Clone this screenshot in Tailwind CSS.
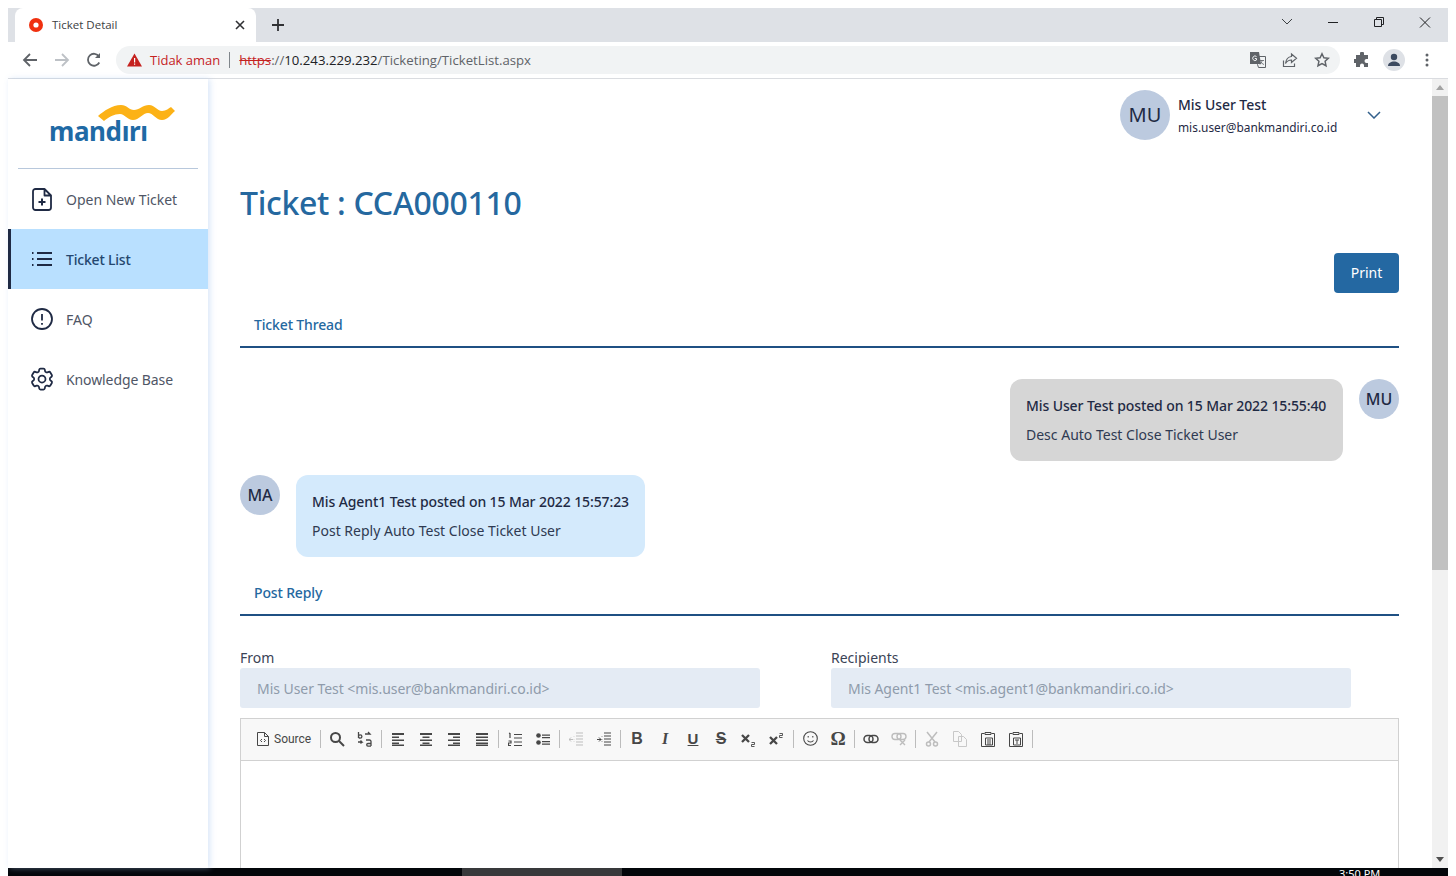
<!DOCTYPE html>
<html lang="en">
<head>
  <meta charset="UTF-8" />
  <title>Ticket Detail</title>
  <script src="https://cdn.jsdelivr.net/npm/@tailwindcss/browser@4"></script>
</head>
<body class="bg-white overflow-hidden font-['Noto_Sans','Open_Sans',sans-serif]">
  <div class="w-[1456px] h-[876px] pt-2 px-2 flex flex-col overflow-hidden">

    <!-- tab strip -->
    <div class="h-[34px] shrink-0 bg-[#dee1e6] flex items-end pl-[7px] relative">
      <div class="w-[241px] h-[34px] bg-white rounded-t-[8px] flex items-center pl-[13px] pr-[11px] pb-[1px]">
        <svg class="w-[16px] h-[16px]" viewBox="0 0 16 16"><circle cx="8" cy="8" r="7" fill="#f0300f"/><circle cx="8" cy="8" r="2.6" fill="#fff"/></svg>
        <span class="ml-[8px] text-[11.5px] text-[#3c4043] font-['Open_Sans',sans-serif]">Ticket Detail</span>
        <svg class="ml-auto w-[10px] h-[10px]" viewBox="0 0 10 10" fill="none" stroke="#303134" stroke-width="1.6"><path d="M1 1l8 8M9 1l-8 8"/></svg>
      </div>
      <svg class="w-[14px] h-[14px] ml-[15px] mb-[10px]" viewBox="0 0 14 14" fill="none" stroke="#303134" stroke-width="1.8"><path d="M7 1v12M1 7h12"/></svg>
      <div class="ml-auto flex items-center h-[28px] self-start text-[#202124]">
        <svg class="w-[46px] h-[28px]" viewBox="0 0 46 28" fill="none" stroke="#3c4043"><path d="M18 11l5 5 5-5"/></svg>
        <svg class="w-[46px] h-[28px]" viewBox="0 0 46 28" fill="none" stroke="#202124"><path d="M18 14.5h10"/></svg>
        <svg class="w-[46px] h-[28px]" viewBox="0 0 46 28" fill="none" stroke="#202124"><path d="M18.5 11.5h7v7h-7zM20.5 11.500v-2h7v7h-2"/></svg>
        <svg class="w-[46px] h-[28px]" viewBox="0 0 46 28" fill="none" stroke="#202124"><path d="M18 9.500l10 10M28 9.500l-10 10"/></svg>
      </div>
    </div>

    <!-- address bar -->
    <div class="h-[37px] shrink-0 flex items-center border-b border-[#dadce0] relative">
      <svg class="w-[16px] h-[16px] ml-[14px]" viewBox="0 0 16 16" fill="none" stroke="#5f6368" stroke-width="1.8"><path d="M15 8H2M8 2L2 8l6 6"/></svg>
      <svg class="w-[16px] h-[16px] ml-[16px]" viewBox="0 0 16 16" fill="none" stroke="#bdc1c6" stroke-width="1.8"><path d="M1 8h13M8 2l6 6-6 6"/></svg>
      <svg class="w-[16px] h-[16px] ml-[16px]" viewBox="0 0 16 16" fill="none" stroke="#5f6368" stroke-width="1.8"><path d="M13.3 10.5A6 6 0 1 1 13 4.5"/><path d="M14 1v5H9" fill="#5f6368" stroke="none"/></svg>
      <div class="ml-[14px] w-[1224px] h-[28px] bg-[#f1f3f4] rounded-full flex items-center pl-[11px] text-[13px] font-['Open_Sans',sans-serif]">
        <svg class="w-[15px] h-[14px]" viewBox="0 0 15 14"><path d="M7.5 0.5L15 13.5H0z" fill="#c5221f"/><path d="M7 5h1.200v4.500H7zM7 10.500h1.200v1.300H7z" fill="#fff"/></svg>
        <span class="ml-[8px] pt-[1px] text-[#c5221f]">Tidak aman</span>
        <span class="w-px h-[16px] bg-[#80868b] ml-[9px]"></span>
        <span class="pt-[1px] text-[13.2px]"><span class="ml-[9px] text-[#c5221f] line-through">https</span><span class="text-[#5f6368]">://</span><span class="text-[#202124]">10.243.229.232</span><span class="text-[#5f6368]">/Ticketing/TicketList.aspx</span></span>
        <div class="ml-auto flex items-center pr-[10px] gap-[16px]">
          <svg class="w-[16px] h-[16px]" viewBox="0 0 16 16"><path d="M6.5 4.5h9v11h-7l-1-3z" fill="#f1f3f4" stroke="#5f6368"/><path d="M0 0h9l2 12H0z" fill="#5f6368"/><path d="M6.500 4.500a2.300 2.300 0 1 0 0 3.500V6.500H4.800" fill="none" stroke="#f1f3f4"/><path d="M10 8.500h4M12 8c0 2-1 3.500-2 4.500M11 10c.5 1 1.500 2 3 2.500" stroke="#5f6368" stroke-width=".8" fill="none"/></svg>
          <svg class="w-[16px] h-[16px]" viewBox="0 0 16 16" fill="none" stroke="#5f6368" stroke-width="1.200"><path d="M1.500 8.500v6h11v-3"/><path d="M9.500 2l5 4.200-5 4.200V8C7 8 5 9 3.500 11.500 4 7.500 6 4.800 9.500 4.500z"/></svg>
          <svg class="w-[16px] h-[16px]" viewBox="0 0 16 16" fill="none" stroke="#5f6368" stroke-width="1.500"><path d="M8 1.800l1.900 4 4.400.5-3.200 3 .9 4.400L8 11.500l-4 2.200.9-4.400-3.200-3 4.400-.5z"/></svg>
        </div>
      </div>
      <svg class="w-[16px] h-[16px] ml-[14px]" viewBox="0 0 16 16" fill="#5f6368"><path d="M6 1.500a2 2 0 0 1 4 0V3h4v4h-1.500a2 2 0 0 0 0 4H14v4h-4v-1.500a2 2 0 0 0-4 0V15H2v-4H.8a2 2 0 0 1 0-4H2V3h4z"/></svg>
      <div class="ml-[13px] w-[22px] h-[22px] rounded-full bg-[#dee1e6] flex items-center justify-center">
        <svg class="w-[14px] h-[14px]" viewBox="0 0 14 14" fill="#3c4a60"><circle cx="7" cy="4" r="3.200"/><path d="M1 13c0-3 3-4.500 6-4.500s6 1.500 6 4.500z"/></svg>
      </div>
      <svg class="w-[4px] h-[14px] ml-[20px]" viewBox="0 0 4 14" fill="#5f6368"><circle cx="2" cy="2" r="1.500"/><circle cx="2" cy="7" r="1.500"/><circle cx="2" cy="12" r="1.500"/></svg>
    </div>

    <!-- page -->
    <div class="flex-1 flex min-h-0">
      <!-- sidebar -->
      <aside class="w-[200px] shrink-0 bg-white shadow-[2px_0_6px_rgba(170,200,240,0.45)] relative z-10 flex flex-col">
        <div class="h-[90px] mx-[10px] border-b border-[#b8c8dc] shrink-0 relative">
          <span class="absolute left-[31px] top-[34px] text-[26px] leading-[36px] font-bold text-[#1f6aa5] tracking-[-0.4px]">mandırı</span>
          <svg class="absolute left-[80px] top-[26px] w-[77px] h-[16px]" viewBox="0 0 77 16" fill="#fcb216"><path d="M0 11C6 6 14 0 23 0C29 0 31 5 36 5C41 5 45 0 51 0C57 0 59 6 64 6C68 6 71 3 73 2L77 6C73 9 70 15 64 15C58 15 55 8 50 8C45 8 41 15 35 15C29 15 27 9 22 9C16 9 11 12 6 16Z"/></svg>
        </div>
        <a class="h-[60px] flex items-center pl-[20px] text-[14px] text-[#4f5666]">
          <span class="w-[28px] flex justify-center"><svg class="w-[20px] h-[23px]" viewBox="0 0 20 23" fill="none" stroke="#1f2a44" stroke-width="1.800" stroke-linejoin="round"><path d="M12.500 1H3.500A2.500 2.500 0 0 0 1 3.500v16A2.500 2.500 0 0 0 3.500 22h13a2.500 2.500 0 0 0 2.500-2.500V7.500zM12.500 1v6.500H19"/><path d="M10 10.500v7M6.500 14h7" stroke-width="2"/></svg></span>
          <span class="ml-[10px]">Open New Ticket</span>
        </a>
        <a class="h-[60px] flex items-center pl-[17px] bg-[#b9e0ff] border-l-[3px] border-[#1f2a44] text-[14px] font-medium tracking-[-0.2px] text-[#24476f]">
          <span class="w-[28px] flex justify-center"><svg class="w-[22px] h-[16px]" viewBox="0 0 22 16" fill="none" stroke="#1f2a44" stroke-width="1.800"><path d="M6 2h15M6 8h15M6 14h15M1 2h1.500M1 8h1.500M1 14h1.500"/></svg></span>
          <span class="ml-[10px]">Ticket List</span>
        </a>
        <a class="h-[60px] flex items-center pl-[20px] text-[14px] text-[#4f5666]">
          <span class="w-[28px] flex justify-center"><svg class="w-[22px] h-[22px]" viewBox="0 0 22 22" fill="none" stroke="#1f2a44" stroke-width="1.800"><circle cx="11" cy="11" r="10"/><path d="M11 6v6.500M11 15v1.800"/></svg></span>
          <span class="ml-[10px]">FAQ</span>
        </a>
        <a class="h-[60px] flex items-center pl-[20px] text-[14px] text-[#4f5666]">
          <span class="w-[28px] flex justify-center"><svg class="w-[28px] h-[28px]" viewBox="0 0 24 24" fill="none" stroke="#1f2a44" stroke-width="1.500" stroke-linecap="round" stroke-linejoin="round"><path d="M9.594 3.94c.09-.542.56-.94 1.11-.94h2.593c.55 0 1.02.398 1.11.94l.213 1.281c.063.374.313.686.645.87.074.04.147.083.22.127.325.196.72.257 1.075.124l1.217-.456a1.125 1.125 0 0 1 1.37.49l1.296 2.247a1.125 1.125 0 0 1-.26 1.431l-1.003.827c-.293.241-.438.613-.43.992a7.723 7.723 0 0 1 0 .255c-.008.378.137.75.43.991l1.004.827c.424.35.534.955.26 1.43l-1.298 2.247a1.125 1.125 0 0 1-1.369.491l-1.217-.456c-.355-.133-.75-.072-1.076.124a6.47 6.47 0 0 1-.22.128c-.331.183-.581.495-.644.869l-.213 1.281c-.09.543-.56.94-1.11.94h-2.594c-.55 0-1.019-.398-1.11-.94l-.213-1.281c-.062-.374-.312-.686-.644-.87a6.52 6.52 0 0 1-.22-.127c-.325-.196-.72-.257-1.076-.124l-1.217.456a1.125 1.125 0 0 1-1.369-.49l-1.297-2.247a1.125 1.125 0 0 1 .26-1.431l1.004-.827c.292-.24.437-.613.43-.991a6.932 6.932 0 0 1 0-.255c.007-.38-.138-.751-.43-.992l-1.004-.827a1.125 1.125 0 0 1-.26-1.43l1.297-2.247a1.125 1.125 0 0 1 1.37-.491l1.216.456c.356.133.751.072 1.076-.124.072-.044.146-.086.22-.128.332-.183.582-.495.644-.869l.214-1.28Z"/><path d="M15 12a3 3 0 1 1-6 0 3 3 0 0 1 6 0Z"/></svg></span>
          <span class="ml-[10px] tracking-[-0.1px]">Knowledge Base</span>
        </a>
      </aside>

      <!-- main -->
      <main class="w-[1224px] shrink-0 overflow-hidden pl-[32px] pr-[33px] text-[14px] text-[#1f2a44]">
        <div class="h-[61px] pt-[11px] flex justify-end ml-[-32px] mr-[-33px]">
          <div class="flex items-center h-[50px] w-[312px]">
            <div class="w-[50px] h-[50px] rounded-full bg-[#bccadf] flex items-center justify-center text-[20px] text-[#1f2a44]">MU</div>
            <div class="ml-[8px] w-[188px]">
              <div class="text-[14px] font-medium leading-[20px] tracking-[-0.05px] text-[#1f2a44]">Mis User Test</div>
              <div class="text-[11.9px] leading-[16px] mt-[4px] text-[#1f2a44]">mis.user@bankmandiri.co.id</div>
            </div>
            <svg class="w-[14px] h-[8px] ml-[1px]" viewBox="0 0 14 8" fill="none" stroke="#33608c" stroke-width="1.500"><path d="M1 1l6 6 6-6"/></svg>
          </div>
        </div>
        <h1 class="mt-[36px] text-[32px] leading-[54px] font-medium tracking-[-0.3px] text-[#25689f]">Ticket : CCA000110</h1>
        <div class="flex justify-end mt-[23px]">
          <button class="w-[65px] h-[40px] pb-[2px] rounded-[4px] bg-[#2468a2] text-white text-[14px]">Print</button>
        </div>
        <div class="mt-[12px] h-[43px] pl-[14px] pb-[2px] border-b-2 border-[#1f5083] flex items-center font-medium tracking-[-0.15px] text-[#25689f]">Ticket Thread</div>

        <div class="mt-[31px] flex justify-end gap-[16px]">
          <div class="w-[333px] h-[82px] bg-[#d6d6d6] rounded-[12px] px-[16px] pt-[17px] whitespace-nowrap">
            <p class="leading-[20px] font-medium tracking-[-0.1px]">Mis User Test posted on 15 Mar 2022 15:55:40</p>
            <p class="leading-[20px] mt-[9px] text-[#2f3a52]">Desc Auto Test Close Ticket User</p>
          </div>
          <div class="w-[40px] h-[40px] rounded-full bg-[#bccadf] flex items-center justify-center text-[16px] font-medium">MU</div>
        </div>

        <div class="mt-[14px] flex gap-[16px]">
          <div class="w-[40px] h-[40px] rounded-full bg-[#bccadf] flex items-center justify-center text-[16px] font-medium">MA</div>
          <div class="w-[349px] h-[82px] bg-[#d4eafc] rounded-[12px] px-[16px] pt-[17px] whitespace-nowrap">
            <p class="leading-[20px] font-medium tracking-[-0.1px]">Mis Agent1 Test posted on 15 Mar 2022 15:57:23</p>
            <p class="leading-[20px] mt-[9px] text-[#2f3a52]">Post Reply Auto Test Close Ticket User</p>
          </div>
        </div>

        <div class="mt-[14px] h-[45px] pl-[14px] border-b-2 border-[#1f5083] flex items-center font-medium tracking-[-0.15px] text-[#25689f]">Post Reply</div>

        <div class="mt-[32px] flex gap-[71px]">
          <div class="w-[520px]">
            <label class="block leading-[20px] text-[#3a4356]">From</label>
            <div class="h-[40px] bg-[#e4ebf4] rounded-[3px] pl-[17px] flex items-center tracking-[-0.05px] text-[#8f9bab]">Mis User Test &lt;mis.user@bankmandiri.co.id&gt;</div>
          </div>
          <div class="w-[520px]">
            <label class="block leading-[20px] text-[#3a4356]">Recipients</label>
            <div class="h-[40px] bg-[#e4ebf4] rounded-[3px] pl-[17px] flex items-center tracking-[-0.05px] text-[#8f9bab]">Mis Agent1 Test &lt;mis.agent1@bankmandiri.co.id&gt;</div>
          </div>
        </div>

        <!-- editor -->
        <div class="mt-[10px] h-[200px] border border-[#d1d1d1]">
          <div class="h-[42px] pb-[2px] bg-[#f8f8f8] border-b border-[#d1d1d1] flex items-center text-[#474747]">
            <div class="flex items-center w-[79px] pl-[16px] font-['Roboto',sans-serif] text-[12px]">
              <svg class="w-[12px] h-[14px] shrink-0" viewBox="0 0 12 14" fill="none" stroke="#474747"><path d="M7.500.5H.5v13h11V4.500zM7.500.5v4h4"/><path d="M5 7L3.500 8.500 5 10M7 7l1.500 1.500L7 10"/></svg>
              <span class="ml-[5px]">Source</span>
            </div>
            <span class="w-px h-[18px] bg-[#bcbcbc] mr-[2px]"></span>
            <span class="w-[28px] flex justify-center"><svg class="w-[16px] h-[16px]" viewBox="0 0 16 16" fill="none" stroke="#474747" stroke-width="2"><circle cx="6.500" cy="6.500" r="4.500"/><path d="M10 10l5 5"/></svg></span>
            <span class="w-[28px] flex justify-center"><svg class="w-[16px] h-[16px]" viewBox="0 0 16 16" fill="none" stroke="#474747" stroke-width="1.300"><path d="M1.500 1v6M1.500 5.500a1.700 1.700 0 1 0 3.400 0 1.700 1.700 0 1 0-3.400 0M8 3h5l-2-2M1 11h4l-1.500-1.500M5 11l-1.500 1.500M9 9h3.500a1.500 1.500 0 0 1 1.500 1.500V15M14 12.500h-3a1.300 1.300 0 0 0 0 2.600h3"/></svg></span>
            <span class="w-px h-[18px] bg-[#bcbcbc] mx-[2px]"></span>
            <span class="w-[28px] flex justify-center"><svg class="w-[14px] h-[14px]" viewBox="0 0 14 14" fill="#474747"><path d="M1 1h12v2H1zM1 4.500h7v1.500H1zM1 7.500h12v1.500H1zM1 10.500h7v1.500H1zM1 12.500h12V14H1z"/></svg></span>
            <span class="w-[28px] flex justify-center"><svg class="w-[14px] h-[14px]" viewBox="0 0 14 14" fill="#474747"><path d="M1 1h12v2H1zM3.500 4.500h7v1.500h-7zM1 7.500h12v1.500H1zM3.500 10.500h7v1.500h-7zM1 12.500h12V14H1z"/></svg></span>
            <span class="w-[28px] flex justify-center"><svg class="w-[14px] h-[14px]" viewBox="0 0 14 14" fill="#474747"><path d="M1 1h12v2H1zM6 4.500h7v1.500H6zM1 7.500h12v1.500H1zM6 10.500h7v1.500H6zM1 12.500h12V14H1z"/></svg></span>
            <span class="w-[28px] flex justify-center"><svg class="w-[14px] h-[14px]" viewBox="0 0 14 14" fill="#474747"><path d="M1 1h12v2H1zM1 4.500h12v1.500H1zM1 7.500h12v1.500H1zM1 10.500h12v1.500H1zM1 12.500h12V14H1z"/></svg></span>
            <span class="w-px h-[18px] bg-[#bcbcbc] mx-[2px]"></span>
            <span class="w-[28px] flex justify-center"><svg class="w-[14px] h-[14px]" viewBox="0 0 14 14" fill="none" stroke="#474747" stroke-width="1.200"><path d="M6 2.500h8M6 6h8M6 10h8M6 13.500h8M2 1v5M1 1.500l1-.5M.5 9h2.500v2H.5v2.500H3"/></svg></span>
            <span class="w-[28px] flex justify-center"><svg class="w-[14px] h-[14px]" viewBox="0 0 14 14" fill="#474747"><circle cx="2.500" cy="3.500" r="2.300"/><circle cx="2.500" cy="10.500" r="2.300"/><path d="M6 2.500h8v1.200H6zM6 5h8v1.200H6zM6 9h8v1.200H6zM6 11.500h8v1.200H6z"/></svg></span>
            <span class="w-px h-[18px] bg-[#bcbcbc] mx-[2px]"></span>
            <span class="w-[28px] flex justify-center"><svg class="w-[14px] h-[14px]" viewBox="0 0 14 14" fill="none" stroke="#bdbdbd"><path d="M7 1h7M7 4h7M7 7h7M7 10h7M7 13h7M5 4.500v.5M5 7v.5M5 9.500v.5M4 7.500H0M2 5.500l-2 2 2 2"/></svg></span>
            <span class="w-[28px] flex justify-center"><svg class="w-[14px] h-[14px]" viewBox="0 0 14 14" fill="none" stroke="#474747"><path d="M7 1h7M7 4h7M7 7h7M7 10h7M7 13h7M5 4.500v.5M5 7v.5M5 9.500v.5M0 7.500h4M2 5.500l2 2-2 2"/></svg></span>
            <span class="w-px h-[18px] bg-[#bcbcbc] mx-[2px]"></span>
            <span class="w-[28px] flex justify-center font-['Liberation_Sans',sans-serif] text-[16px] leading-[16px] font-bold">B</span>
            <span class="w-[28px] flex justify-center font-['Liberation_Serif',serif] text-[16px] leading-[16px] font-bold italic">I</span>
            <span class="w-[28px] flex justify-center font-['Liberation_Sans',sans-serif] text-[15px] leading-[16px] font-bold underline">U</span>
            <span class="w-[28px] flex justify-center font-['Liberation_Sans',sans-serif] text-[16px] leading-[16px] font-bold line-through">S</span>
            <span class="w-[28px] flex justify-center"><svg class="w-[16px] h-[16px]" viewBox="0 0 16 16" fill="none" stroke="#474747"><path d="M1 4l7 7M8 4l-7 7" stroke-width="2.300"/><path d="M10.500 11.500h3v2h-3v2h3" stroke-width=".9"/></svg></span>
            <span class="w-[28px] flex justify-center"><svg class="w-[16px] h-[16px]" viewBox="0 0 16 16" fill="none" stroke="#474747"><path d="M1 6l7 7M8 6l-7 7" stroke-width="2.300"/><path d="M10.500 2.500h3v2h-3v2h3" stroke-width=".9"/></svg></span>
            <span class="w-px h-[18px] bg-[#bcbcbc] mx-[2px]"></span>
            <span class="w-[28px] flex justify-center"><svg class="w-[15px] h-[15px]" viewBox="0 0 15 15" fill="none" stroke="#474747" stroke-width="1.100"><circle cx="7.500" cy="7.500" r="6.800"/><path d="M4.500 9.500c1.500 2 4.500 2 6 0M5.200 5v1.500M9.800 5v1.500"/></svg></span>
            <span class="w-[28px] flex justify-center font-['Liberation_Serif',serif] text-[19px] leading-[16px] font-bold">Ω</span>
            <span class="w-px h-[18px] bg-[#bcbcbc] mx-[2px]"></span>
            <span class="w-[28px] flex justify-center"><svg class="w-[16px] h-[10px]" viewBox="0 0 16 10" fill="none" stroke="#474747" stroke-width="1.500"><rect x="1" y="1.500" width="9" height="7" rx="3.500"/><rect x="6" y="1.500" width="9" height="7" rx="3.500"/></svg></span>
            <span class="w-[28px] flex justify-center"><svg class="w-[16px] h-[14px]" viewBox="0 0 16 14" fill="none" stroke="#bdbdbd" stroke-width="1.400"><rect x="1" y="1.500" width="9" height="6" rx="3"/><rect x="6" y="1.500" width="9" height="6" rx="3"/><path d="M9 8l5 5M14 8l-5 5"/></svg></span>
            <span class="w-px h-[18px] bg-[#bcbcbc] mx-[2px]"></span>
            <span class="w-[28px] flex justify-center"><svg class="w-[14px] h-[16px]" viewBox="0 0 14 16" fill="none" stroke="#bdbdbd" stroke-width="1.500"><path d="M2 1l8 10M12 1L4 11"/><circle cx="3.500" cy="13" r="2"/><circle cx="10.500" cy="13" r="2"/></svg></span>
            <span class="w-[28px] flex justify-center"><svg class="w-[14px] h-[16px]" viewBox="0 0 14 16" fill="none" stroke="#c8c8c8"><path d="M.5.500h5l3 3v7h-8zM5.500 5.500h5l3 3v7h-8z" fill="#f8f8f8"/></svg></span>
            <span class="w-[28px] flex justify-center"><svg class="w-[14px] h-[16px]" viewBox="0 0 14 16" fill="none" stroke="#474747"><path d="M3.500 2.500h-3v13h13v-13h-3"/><path d="M4 1.500h6v2H4z"/><path d="M4.500 7h7v7h-7zM6 9h4M6 11h4M6 13h4"/></svg></span>
            <span class="w-[28px] flex justify-center"><svg class="w-[14px] h-[16px]" viewBox="0 0 14 16" fill="none" stroke="#474747"><path d="M3.500 2.500h-3v13h13v-13h-3"/><path d="M4 1.500h6v2H4z"/><path d="M4.500 7h7v7h-7zM6 9h4M8 9v4"/></svg></span>
            <span class="w-px h-[18px] bg-[#bcbcbc] ml-[2px]"></span>
          </div>
        </div>
      </main>

      <!-- scrollbar -->
      <div class="w-[16px] shrink-0 bg-[#f1f1f1] flex flex-col items-center relative">
        <svg class="w-[8px] h-[5px] mt-[6px]" viewBox="0 0 8 5" fill="#a3a3a3"><path d="M4 0l4 5H0z"/></svg>
        <div class="w-full h-[474px] bg-[#c1c1c1] mt-[6px]"></div>
        <svg class="w-[8px] h-[5px] mt-auto mb-[6px]" viewBox="0 0 8 5" fill="#505050"><path d="M0 0h8L4 5z"/></svg>
      </div>
    </div>

    <!-- taskbar sliver -->
    <div class="h-[8px] shrink-0 bg-[#03060a] flex overflow-hidden relative">
      <div class="ml-[454px] w-[160px] bg-[#38393b]"></div>
      <span class="absolute left-[1331px] top-[-1px] text-[11px] leading-[14px] text-white">3:50 PM</span>
    </div>
  </div>
</body>
</html>
